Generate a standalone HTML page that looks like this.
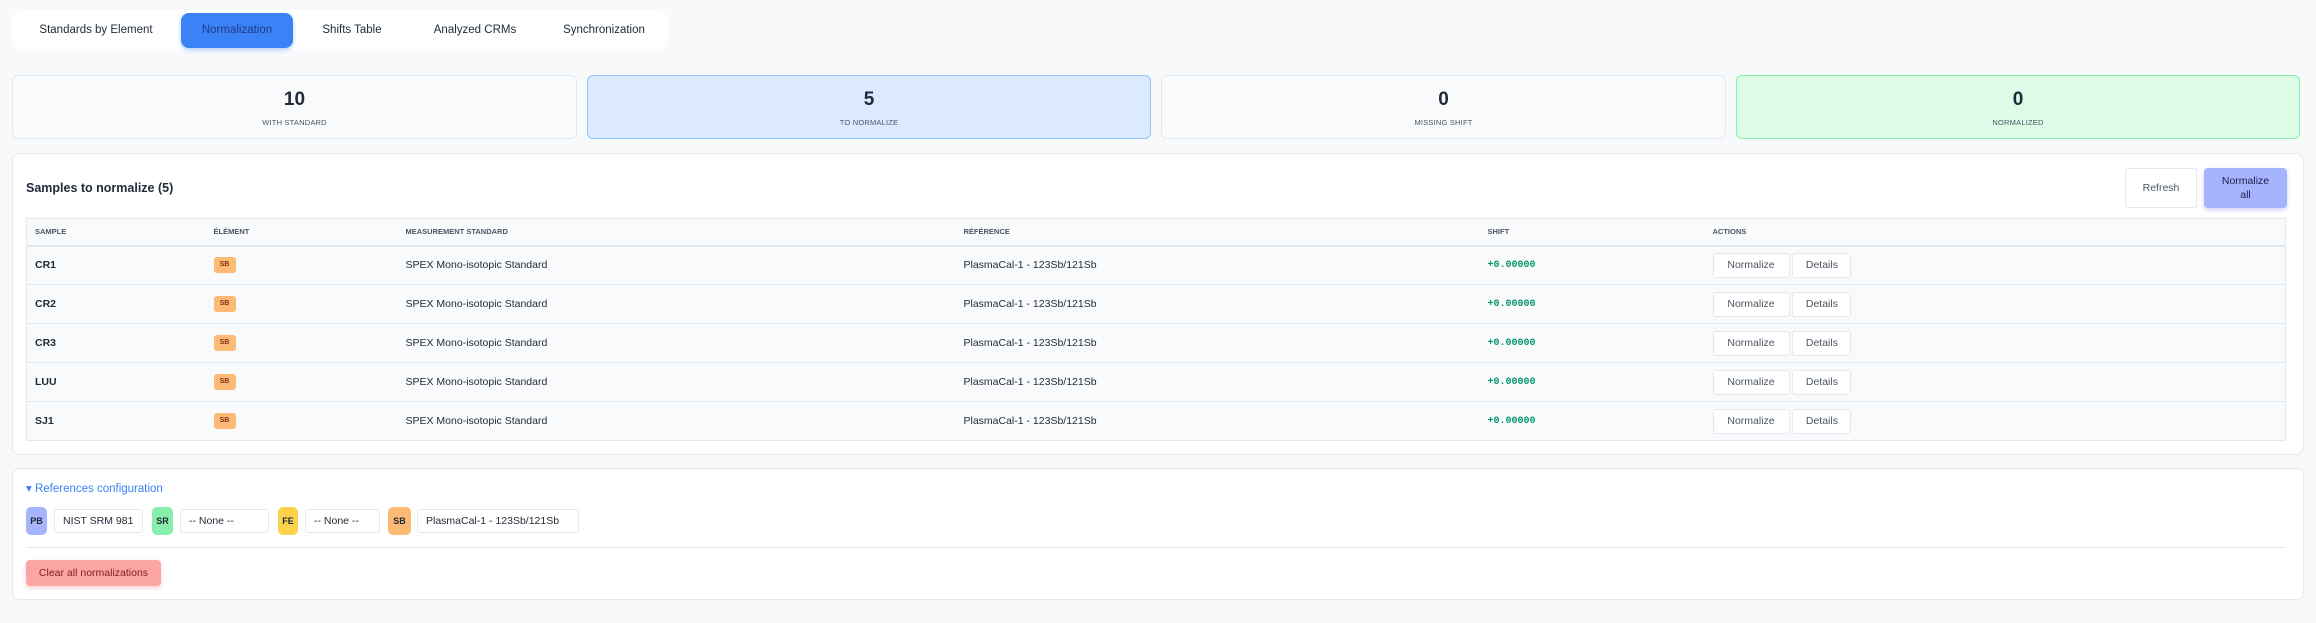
<!DOCTYPE html>
<html><head><meta charset="utf-8"><style>
*{box-sizing:border-box;margin:0;padding:0}
body{width:2316px;height:623px;background:#f8f9fb;font-family:"Liberation Sans",sans-serif;color:#1f2937;position:relative;overflow:hidden}
.a{position:absolute}
.tabs{left:12px;top:10px;width:656px;height:41px;background:#fff;border-radius:10px}
.tab{position:absolute;top:3px;height:35px;line-height:35px;font-size:11.5px;color:#1f2937;text-align:center}
.tab.on{background:#3b82f6;border-radius:8px;color:#1e3a8a;box-shadow:0 2px 4px rgba(59,130,246,.4)}
.card{top:75px;height:64px;border:1px solid #e2e8f0;border-radius:6px;background:#f8fafc;text-align:center}
.card b{display:block;font-size:19px;margin-top:13px;color:#1f2937}
.card span{display:block;font-size:7.5px;color:#4b5563;margin-top:7px;letter-spacing:.2px}
.panel{left:12px;width:2292px;background:#fff;border:1px solid #e2e8f0;border-radius:8px}
table{position:absolute;left:26px;top:218px;width:2260px;border-collapse:collapse;font-size:10.5px;border:1px solid #e2e8f0}
th{height:27px;text-align:left;font-size:7.5px;color:#4b5563;font-weight:bold;background:#f8fafc;border-bottom:2px solid #e2e8f0;padding-left:8px}
td{height:39px;background:#f8fafc;border-bottom:1px solid #e2e8f0;padding-left:8px}
.sb{display:inline-block;background:#fdba74;color:#7c2d12;font-size:7px;font-weight:bold;width:22px;height:16px;line-height:16px;text-align:center;border-radius:3px}
.sh{color:#059669;font-family:"Liberation Mono",monospace;font-weight:bold;font-size:10px}
.btn{display:inline-block;height:25px;line-height:23px;border:1px solid #e2e8f0;background:#fff;border-radius:3px;color:#4b5563;font-size:10.5px;text-align:center;vertical-align:middle}
.chip{top:507px;height:28px;line-height:28px;border-radius:5px;font-size:9px;font-weight:bold;text-align:center;color:#1f2937}
.inp{top:509px;height:24px;line-height:22px;border:1px solid #e2e8f0;border-radius:3px;background:#fff;font-size:10.5px;padding-left:8px}
</style></head><body>
<div class="a tabs">
<div class="tab" style="left:8px;width:152px">Standards by Element</div>
<div class="tab on" style="left:169px;width:112px">Normalization</div>
<div class="tab" style="left:290px;width:100px">Shifts Table</div>
<div class="tab" style="left:398px;width:130px">Analyzed CRMs</div>
<div class="tab" style="left:535px;width:114px">Synchronization</div>
</div>
<div class="a card" style="left:12px;width:565px"><b>10</b><span>WITH STANDARD</span></div>
<div class="a card" style="left:587px;width:564px;background:#dbeafe;border-color:#93c5fd"><b>5</b><span>TO NORMALIZE</span></div>
<div class="a card" style="left:1161px;width:565px"><b>0</b><span>MISSING SHIFT</span></div>
<div class="a card" style="left:1736px;width:564px;background:#dcfce7;border-color:#86efac"><b>0</b><span>NORMALIZED</span></div>

<div class="a panel" style="top:153px;height:302px"></div>
<div class="a" style="left:26px;top:181px;font-size:12.5px;font-weight:bold">Samples to normalize (5)</div>
<div class="a btn" style="left:2125px;top:168px;width:72px;height:40px;line-height:38px;color:#4b5563">Refresh</div>
<div class="a" style="left:2204px;top:168px;width:83px;height:40px;background:#a5b4fc;border-radius:4px;font-size:10.5px;text-align:center;padding-top:6px;line-height:14px;color:#1e1b4b;box-shadow:0 2px 4px rgba(99,102,241,.3)">Normalize<br>all</div>
<table>
<tr><th style="width:179px">SAMPLE</th><th style="width:192px">ÉLÉMENT</th><th style="width:558px">MEASUREMENT STANDARD</th><th style="width:524px">RÉFÉRENCE</th><th style="width:225px">SHIFT</th><th>ACTIONS</th></tr>
<tr><td><b>CR1</b></td><td><span class="sb">SB</span></td><td>SPEX Mono-isotopic Standard</td><td>PlasmaCal-1 - 123Sb/121Sb</td><td class="sh">+0.00000</td><td><span class="btn" style="width:77px">Normalize</span> <span class="btn" style="width:59px">Details</span></td></tr>
<tr><td><b>CR2</b></td><td><span class="sb">SB</span></td><td>SPEX Mono-isotopic Standard</td><td>PlasmaCal-1 - 123Sb/121Sb</td><td class="sh">+0.00000</td><td><span class="btn" style="width:77px">Normalize</span> <span class="btn" style="width:59px">Details</span></td></tr>
<tr><td><b>CR3</b></td><td><span class="sb">SB</span></td><td>SPEX Mono-isotopic Standard</td><td>PlasmaCal-1 - 123Sb/121Sb</td><td class="sh">+0.00000</td><td><span class="btn" style="width:77px">Normalize</span> <span class="btn" style="width:59px">Details</span></td></tr>
<tr><td><b>LUU</b></td><td><span class="sb">SB</span></td><td>SPEX Mono-isotopic Standard</td><td>PlasmaCal-1 - 123Sb/121Sb</td><td class="sh">+0.00000</td><td><span class="btn" style="width:77px">Normalize</span> <span class="btn" style="width:59px">Details</span></td></tr>
<tr><td><b>SJ1</b></td><td><span class="sb">SB</span></td><td>SPEX Mono-isotopic Standard</td><td>PlasmaCal-1 - 123Sb/121Sb</td><td class="sh">+0.00000</td><td><span class="btn" style="width:77px">Normalize</span> <span class="btn" style="width:59px">Details</span></td></tr>
</table>

<div class="a panel" style="top:468px;height:132px"></div>
<div class="a" style="left:26px;top:481px;font-size:11.5px;color:#3b82f6">▾ References configuration</div>
<div class="a chip" style="left:26px;width:21px;background:#a5b4fc">PB</div>
<div class="a inp" style="left:54px;width:89px">NIST SRM 981</div>
<div class="a chip" style="left:152px;width:21px;background:#86efac">SR</div>
<div class="a inp" style="left:180px;width:89px">-- None --</div>
<div class="a chip" style="left:278px;width:20px;background:#fcd34d">FE</div>
<div class="a inp" style="left:305px;width:75px">-- None --</div>
<div class="a chip" style="left:388px;width:23px;background:#fdba74">SB</div>
<div class="a inp" style="left:417px;width:162px">PlasmaCal-1 - 123Sb/121Sb</div>
<div class="a" style="left:26px;top:547px;width:2260px;height:1px;background:#e2e8f0"></div>
<div class="a" style="left:26px;top:560px;width:135px;height:26px;line-height:26px;background:#fca5a5;border-radius:4px;font-size:10.5px;text-align:center;color:#7f1d1d;box-shadow:0 2px 5px rgba(239,68,68,.25)">Clear all normalizations</div>
</body></html>
